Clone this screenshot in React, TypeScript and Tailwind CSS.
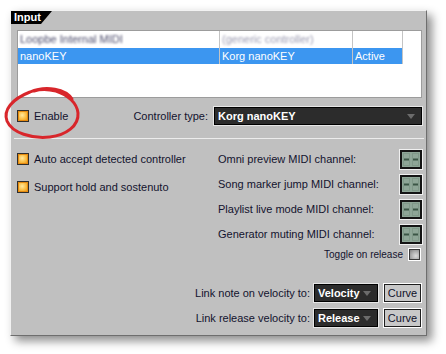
import React from "react";

function OrangeCheck() {
  return (
    <div className="w-[12px] h-[12px] border border-[#2e2e2e] bg-[#e48a10] p-[1px] shrink-0">
      <div className="w-full h-full bg-[radial-gradient(circle_at_40%_40%,#ffeaa0_0%,#fbc048_55%,#ee9a18_100%)]" />
    </div>
  );
}

function Display() {
  return (
    <div className="w-[24px] h-[21px] border border-[#f0f0f0] shrink-0">
      <div className="w-full h-full border-2 border-[#141414] bg-[#8ea697]">
        <svg width="18" height="15" viewBox="0 0 18 15" className="block">
          <rect x="1.5" y="1.5" width="6" height="12" fill="none" stroke="#7f9888" strokeWidth="1" />
          <rect x="10.5" y="1.5" width="6" height="12" fill="none" stroke="#7f9888" strokeWidth="1" />
          <rect x="2" y="6.5" width="5" height="2" fill="#3b5646" />
          <rect x="11" y="6.5" width="5" height="2" fill="#3b5646" />
        </svg>
      </div>
    </div>
  );
}

function DarkSelect({ label, width }: { label: string; width: string }) {
  return (
    <div className={`${width} h-[20px] border border-[#e6e6e6] shrink-0`}>
      <div className="w-full h-full border border-black bg-[#2c2c2c] flex items-center justify-between pl-[3px] pr-[6px]">
        <span className="text-white font-bold text-[11px] leading-none">{label}</span>
        <svg width="8" height="5" viewBox="0 0 8 5">
          <polygon points="0,0 8,0 4,5" fill="#6c6c6c" />
        </svg>
      </div>
    </div>
  );
}

function CurveButton() {
  return (
    <div className="w-[39px] h-[20px] border border-white shrink-0">
      <div className="w-full h-full border border-[#1e1e1e] bg-[#c8c8c8] flex items-center justify-center text-[11px] leading-none text-[#10102a]">
        Curve
      </div>
    </div>
  );
}

export default function App() {
  return (
    <div className="relative w-[446px] h-[354px] bg-white pt-[10px] pl-[10px] font-['Liberation_Sans',Arial,sans-serif] text-[11px] text-[#13132e] overflow-hidden">
      <div className="w-[417px] h-[326px] bg-[#c0c0c0] border border-t-[#f2f2f2] border-l-[#f2f2f2] border-r-[#6e6e6e] border-b-[#6e6e6e] shadow-[5px_5px_9px_rgba(0,0,0,0.45)] flex flex-col">
        {/* Tab */}
        <div className="h-[13px] w-[41px] bg-black text-white font-bold text-[11px] leading-[13px] pl-[3px] [clip-path:polygon(0_0,100%_0,calc(100%-11px)_100%,0_100%)]">
          Input
        </div>

        {/* List */}
        <div className="mt-[6px] ml-[6px] w-[405px] h-[68px] bg-white border border-[#9c9c9c]">
          <div className="flex h-[17px] items-center">
            <div className="w-[202px] h-full border-r border-[#c4c4c4] pl-[2px] flex items-center">
              <span className="blur-[1.2px] text-[#4a4a6a]">Loopbe Internal MIDI</span>
            </div>
            <div className="w-[133px] h-full border-r border-[#c4c4c4] pl-[2px] flex items-center">
              <span className="blur-[1.2px] text-[#9a9ab0]">(generic controller)</span>
            </div>
            <div className="w-[50px] h-full border-r border-[#c4c4c4]" />
          </div>
          <div className="flex h-[16px] items-center">
            <div className="flex h-full bg-[#3c96f0] text-white">
              <div className="w-[202px] h-full border-r border-[#c4c4c4] pl-[2px] flex items-center">nanoKEY</div>
              <div className="w-[133px] h-full border-r border-[#c4c4c4] pl-[2px] flex items-center">Korg nanoKEY</div>
              <div className="w-[50px] h-full border-r border-[#c4c4c4] pl-[2px] flex items-center">Active</div>
            </div>
          </div>
        </div>

        {/* Enable row */}
        <div className="mt-[8px] ml-[6px] mr-[3px] h-[20px] flex items-center">
          <OrangeCheck />
          <span className="ml-[5px]">Enable</span>
          <span className="ml-auto mr-[5px]">Controller type:</span>
          <DarkSelect label="Korg nanoKEY" width="w-[210px]" />
        </div>

        {/* Separator */}
        <div className="mt-[12px] ml-[3px] mr-[2px] h-[1px] bg-[#ececec]" />

        {/* Main area */}
        <div className="flex ml-[6px] mr-[3px]">
          <div className="w-[201px] flex flex-col pt-[13px] gap-[14px]">
            <div className="h-[14px] flex items-center">
              <OrangeCheck />
              <span className="ml-[5px]">Auto accept detected controller</span>
            </div>
            <div className="h-[14px] flex items-center">
              <OrangeCheck />
              <span className="ml-[5px]">Support hold and sostenuto</span>
            </div>
          </div>
          <div className="flex-1 flex flex-col pt-[10px]">
            <div className="flex flex-col gap-[4px]">
              {[
                "Omni preview MIDI channel:",
                "Song marker jump MIDI channel:",
                "Playlist live mode MIDI channel:",
                "Generator muting MIDI channel:",
              ].map((t) => (
                <div key={t} className="h-[21px] flex items-center justify-between">
                  <span>{t}</span>
                  <Display />
                </div>
              ))}
            </div>
            <div className="mt-[3px] h-[13px] flex items-center justify-end mr-[2px]">
              <span className="text-[10px] mr-[5px]">Toggle on release</span>
              <div className="w-[13px] h-[13px] border border-white">
                <div className="w-full h-full border border-[#3a3a3a] bg-[radial-gradient(circle_at_65%_65%,#dcdcdc_0%,#a8a8a8_60%,#7e7e7e_100%)]" />
              </div>
            </div>
          </div>
        </div>

        {/* Bottom rows */}
        <div className="mt-[22px] mr-[4px] flex flex-col items-end gap-[5px]">
          <div className="flex items-center h-[20px]">
            <span className="mr-[3px]">Link note on velocity to:</span>
            <DarkSelect label="Velocity" width="w-[66px]" />
            <div className="w-[4px]" />
            <CurveButton />
          </div>
          <div className="flex items-center h-[20px]">
            <span className="mr-[3px]">Link release velocity to:</span>
            <DarkSelect label="Release" width="w-[66px]" />
            <div className="w-[4px]" />
            <CurveButton />
          </div>
        </div>
      </div>

      {/* Red annotation ellipse */}
      <svg className="absolute left-0 top-0 pointer-events-none" width="446" height="354" viewBox="0 0 446 354">
        <path
          d="M72 99 C66 89 46 85 30 92 C12 99 3 110 7 121 C12 133 32 139 50 137 C66 135 79 126 78 113 C77 103 68 95 56 91 C48 89 40 89 34 91"
          fill="none"
          stroke="#d8262b"
          strokeWidth="3"
          strokeLinecap="round"
        />
      </svg>
    </div>
  );
}
